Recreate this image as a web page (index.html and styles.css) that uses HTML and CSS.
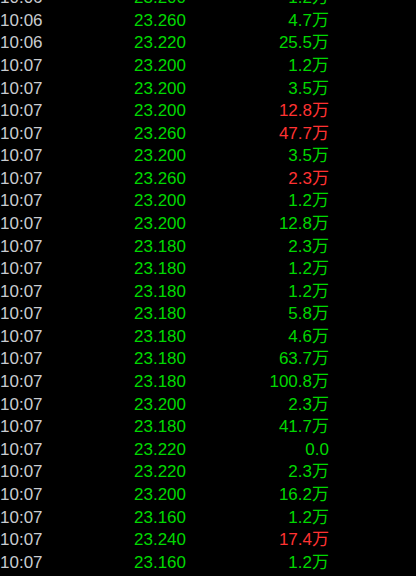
FILE: index.html
```html
<!DOCTYPE html>
<html lang="zh-CN">
<head>
    <meta charset="UTF-8">
    <title>分时成交</title>
    <link rel="stylesheet" href="styles.css">
</head>
<body>
    <div class="ticks">
        <div class="row"><span class="time">10:06</span><span class="price">23.200</span><span class="vol">1.2万</span></div>
        <div class="row"><span class="time">10:06</span><span class="price">23.260</span><span class="vol">4.7万</span></div>
        <div class="row"><span class="time">10:06</span><span class="price">23.220</span><span class="vol">25.5万</span></div>
        <div class="row"><span class="time">10:07</span><span class="price">23.200</span><span class="vol">1.2万</span></div>
        <div class="row"><span class="time">10:07</span><span class="price">23.200</span><span class="vol">3.5万</span></div>
        <div class="row"><span class="time">10:07</span><span class="price">23.200</span><span class="vol up">12.8万</span></div>
        <div class="row"><span class="time">10:07</span><span class="price">23.260</span><span class="vol up">47.7万</span></div>
        <div class="row"><span class="time">10:07</span><span class="price">23.200</span><span class="vol">3.5万</span></div>
        <div class="row"><span class="time">10:07</span><span class="price">23.260</span><span class="vol up">2.3万</span></div>
        <div class="row"><span class="time">10:07</span><span class="price">23.200</span><span class="vol">1.2万</span></div>
        <div class="row"><span class="time">10:07</span><span class="price">23.200</span><span class="vol">12.8万</span></div>
        <div class="row"><span class="time">10:07</span><span class="price">23.180</span><span class="vol">2.3万</span></div>
        <div class="row"><span class="time">10:07</span><span class="price">23.180</span><span class="vol">1.2万</span></div>
        <div class="row"><span class="time">10:07</span><span class="price">23.180</span><span class="vol">1.2万</span></div>
        <div class="row"><span class="time">10:07</span><span class="price">23.180</span><span class="vol">5.8万</span></div>
        <div class="row"><span class="time">10:07</span><span class="price">23.180</span><span class="vol">4.6万</span></div>
        <div class="row"><span class="time">10:07</span><span class="price">23.180</span><span class="vol">63.7万</span></div>
        <div class="row"><span class="time">10:07</span><span class="price">23.180</span><span class="vol">100.8万</span></div>
        <div class="row"><span class="time">10:07</span><span class="price">23.200</span><span class="vol">2.3万</span></div>
        <div class="row"><span class="time">10:07</span><span class="price">23.180</span><span class="vol">41.7万</span></div>
        <div class="row"><span class="time">10:07</span><span class="price">23.220</span><span class="vol">0.0</span></div>
        <div class="row"><span class="time">10:07</span><span class="price">23.220</span><span class="vol">2.3万</span></div>
        <div class="row"><span class="time">10:07</span><span class="price">23.200</span><span class="vol">16.2万</span></div>
        <div class="row"><span class="time">10:07</span><span class="price">23.160</span><span class="vol">1.2万</span></div>
        <div class="row"><span class="time">10:07</span><span class="price">23.240</span><span class="vol up">17.4万</span></div>
        <div class="row"><span class="time">10:07</span><span class="price">23.160</span><span class="vol">1.2万</span></div>
    </div>
</body>
</html>
```

FILE: styles.css
```css
* {
    margin: 0;
    padding: 0;
    box-sizing: border-box;
}

html, body {
    background: #000;
    height: 100%;
    overflow: hidden;
}

body {
    font-family: 'Liberation Sans', 'Noto Sans CJK SC', sans-serif;
    font-size: 17px;
}

.ticks {
    margin-top: -12.8px;
}

.row {
    display: grid;
    grid-template-columns: 134px 80px 115px;
    height: 22.58px;
    line-height: 22.58px;
    white-space: nowrap;
}

.time {
    color: #c8ccd0;
}

.price {
    color: #00d800;
}

.vol {
    color: #00d800;
    text-align: right;
}

.vol.up {
    color: #ff3232;
}
```
